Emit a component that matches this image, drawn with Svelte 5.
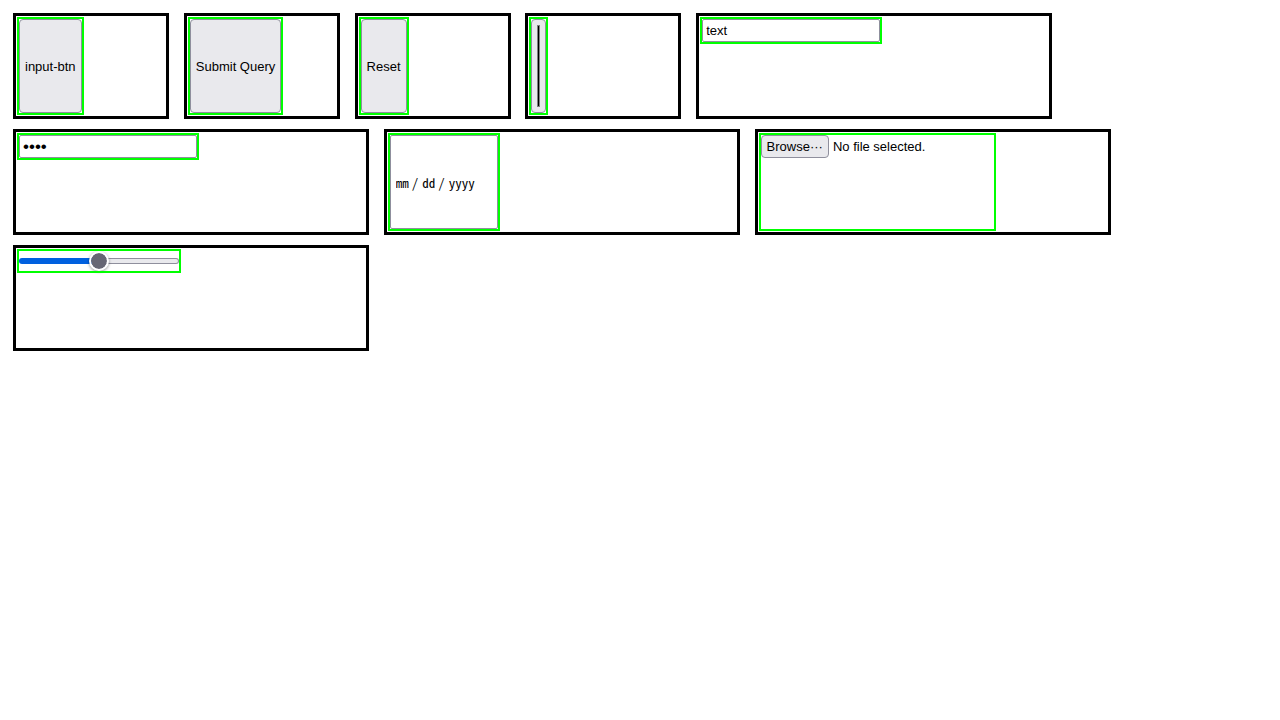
<script>
  let text = $state('text');
  let password = $state('pass');
  let level = $state(50);
</script>

<main>
  <div class="box">
    <span class="ring"><input class="btn" type="button" value="input-btn" /></span>
  </div>
  <div class="box">
    <span class="ring"><input class="btn" type="submit" value="Submit Query" /></span>
  </div>
  <div class="box">
    <span class="ring"><input class="btn" type="reset" value="Reset" /></span>
  </div>
  <div class="box">
    <span class="ring"><input class="btn swatch" type="color" value="#000000" aria-label="Color" /></span>
  </div>
  <div class="box wide">
    <span class="ring short"><input class="field" type="text" bind:value={text} aria-label="Text" /></span>
  </div>
  <div class="box wide">
    <span class="ring short"><input class="field password" type="password" bind:value={password} aria-label="Password" /></span>
  </div>
  <div class="box wide">
    <span class="ring"><input class="field date" type="date" aria-label="Date" /></span>
  </div>
  <div class="box wide">
    <label class="ring file">
      <input class="picker" type="file" />
      <span class="browse">Browse···</span>
      <span>No file selected.</span>
    </label>
  </div>
  <div class="box wide">
    <span class="ring short"><input class="range" style="--level: {level}%" type="range" min="0" max="100" bind:value={level} aria-label="Level" /></span>
  </div>
</main>

<style>
  :global(body) {
    margin: 8px;
    background: #fff;
  }

  main {
    font: 17px/20px Inter, sans-serif;
  }

  .box {
    display: inline-flex;
    align-items: flex-start;
    box-sizing: border-box;
    width: 156px;
    height: 106px;
    margin: 5px;
    padding: 3px;
    border: 3px solid #000;
    vertical-align: top;
    font: 13px/17px "Liberation Sans", Arial, sans-serif;
    color: #000;
  }

  .wide {
    width: 356px;
  }

  .ring {
    display: flex;
    align-self: stretch;
    outline: 2px solid #0f0;
  }

  .short {
    align-self: flex-start;
  }

  input {
    box-sizing: border-box;
    margin: 0;
    font: inherit;
    color: inherit;
  }

  .btn,
  .browse {
    padding: 2px 5px;
    border: 1px solid #8f8f9d;
    border-radius: 4px;
    background: #e9e9ed;
  }

  .swatch {
    appearance: none;
    width: 15px;
    height: auto;
    padding: 5px;
  }

  .swatch::-webkit-color-swatch-wrapper {
    padding: 0;
  }

  .swatch::-webkit-color-swatch {
    border: 1px solid #808080;
    border-radius: 0;
  }

  .field {
    width: 178px;
    padding: 2px 3px;
    border: 1px solid #8f8f9d;
    border-radius: 2px;
    background: #fff;
  }

  .password {
    height: 23px;
    font-size: 17px;
  }

  .date {
    width: 108px;
    padding: 2px 5px;
    font: 13px/17px "Noto Sans Mono CJK JP", "Liberation Mono", monospace;
  }

  .date::-webkit-calendar-picker-indicator {
    display: none;
  }

  .date::-webkit-datetime-edit-month-field,
  .date::-webkit-datetime-edit-day-field,
  .date::-webkit-datetime-edit-year-field {
    padding: 0;
  }

  .date::-webkit-datetime-edit-text {
    padding: 0 4px 0 3px;
  }

  .file {
    position: relative;
    align-items: flex-start;
    gap: 4px;
    width: 233px;
    line-height: 23px;
  }

  .browse {
    line-height: 17px;
  }

  .picker {
    position: absolute;
    inset: 0;
    width: 100%;
    opacity: 0;
  }

  .range {
    appearance: none;
    width: 160px;
    height: 20px;
    background: none;
  }

  .range::-webkit-slider-runnable-track {
    box-sizing: border-box;
    height: 6px;
    border: 1px solid transparent;
    border-radius: 3px;
    background:
      linear-gradient(to right, #0060df var(--level), #e9e9ed var(--level)) padding-box,
      linear-gradient(to right, #0060df var(--level), #8f8f9d var(--level)) border-box;
  }

  .range::-webkit-slider-thumb {
    appearance: none;
    box-sizing: border-box;
    width: 20px;
    height: 20px;
    margin-top: -8px;
    border: 2px solid #fff;
    border-radius: 50%;
    background: #676774;
    background-clip: padding-box;
    box-shadow: 0 1px 3px rgb(0 0 0 / 40%);
  }
</style>
